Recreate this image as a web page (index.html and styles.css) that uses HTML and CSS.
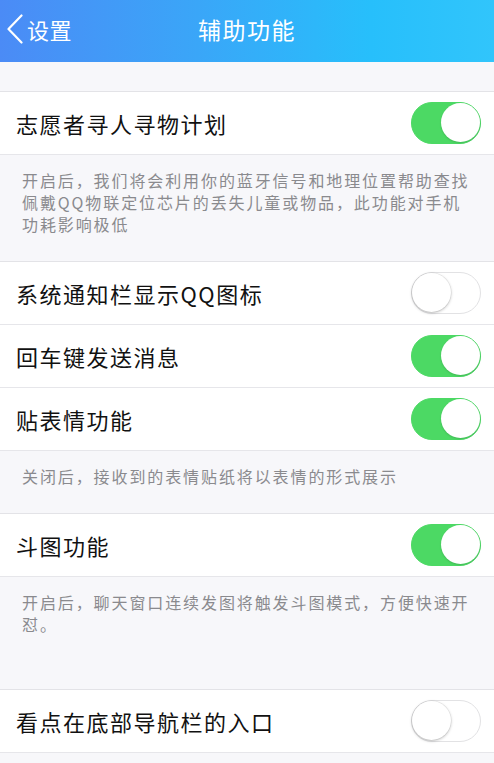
FILE: index.html
```html
<!DOCTYPE html>
<html>
<head>
    <meta charset="utf-8">
    <title>辅助功能</title>
    <link rel="stylesheet" href="styles.css">
</head>
<body>
    <div class="navbar">
        <a class="back" href="#">
            <svg class="chevron" width="18" height="30" viewBox="0 0 18 30">
                <path d="M15.5 1.5 L2.5 15 L15.5 28.5" fill="none" stroke="#fff" stroke-width="2.2" stroke-linecap="round" stroke-linejoin="round"/>
            </svg>
            <span>设置</span>
        </a>
        <div class="title">辅助功能</div>
    </div>

    <div class="spacer"></div>

    <div class="row first">
        <span class="label">志愿者寻人寻物计划</span>
        <span class="switch on"></span>
    </div>
    <div class="desc">
        开启后，我们将会利用你的蓝牙信号和地理位置帮助查找<br>
        佩戴QQ物联定位芯片的丢失儿童或物品，此功能对手机<br>
        功耗影响极低
    </div>

    <div class="row first">
        <span class="label">系统通知栏显示QQ图标</span>
        <span class="switch"></span>
    </div>
    <div class="row">
        <span class="label">回车键发送消息</span>
        <span class="switch on"></span>
    </div>
    <div class="row">
        <span class="label">贴表情功能</span>
        <span class="switch on"></span>
    </div>
    <div class="desc">关闭后，接收到的表情贴纸将以表情的形式展示</div>

    <div class="row first">
        <span class="label">斗图功能</span>
        <span class="switch on"></span>
    </div>
    <div class="desc tall">
        开启后，聊天窗口连续发图将触发斗图模式，方便快速开<br>
        怼。
    </div>

    <div class="row first">
        <span class="label">看点在底部导航栏的入口</span>
        <span class="switch"></span>
    </div>
</body>
</html>
```

FILE: styles.css
```css
body {
    margin: 0;
    background-color: #f7f7fa;
    font-family: "Noto Sans CJK SC", "Noto Sans", sans-serif;
    color: #111;
}
.navbar {
    position: relative;
    height: 62px;
    display: flex;
    align-items: center;
    justify-content: center;
    background: linear-gradient(90deg, #4b8bf6 0%, #3aa6f8 40%, #27bffb 75%, #31c5fb 100%);
    color: #fff;
}
.navbar .back {
    position: absolute;
    left: 6px;
    top: 13px;
    display: flex;
    align-items: center;
    gap: 3px;
    color: #fff;
    text-decoration: none;
    font-size: 22px;
    letter-spacing: 0.5px;
}
.navbar .title {
    font-size: 23px;
    letter-spacing: 1.5px;
    margin-top: -4px;
}
.spacer {
    height: 29px;
}
.row {
    height: 62px;
    display: flex;
    align-items: center;
    justify-content: space-between;
    padding: 0 13px 0 16px;
    background-color: #fff;
    border-bottom: 1px solid #e6e6ea;
}
.row.first {
    border-top: 1px solid #e3e3e7;
}
.row .label {
    font-size: 22px;
    letter-spacing: 1.5px;
}
.switch {
    position: relative;
    width: 70px;
    height: 42px;
    box-sizing: border-box;
    border-radius: 21px;
    border: 1.5px solid #e2e2e4;
    background-color: #fff;
}
.switch::after {
    content: "";
    position: absolute;
    left: 0;
    top: 0;
    width: 39px;
    height: 39px;
    border-radius: 50%;
    background-color: #fff;
    box-shadow: 0 1px 3px rgba(0, 0, 0, 0.25), 0 0 0 0.5px rgba(0, 0, 0, 0.08);
}
.switch.on {
    background-color: #4cd964;
    border-color: #4cd964;
}
.switch.on::after {
    left: auto;
    right: 0;
    box-shadow: 0 1px 2px rgba(0, 0, 0, 0.15);
}
.desc {
    padding: 14px 16px 26px 22px;
    font-size: 16px;
    line-height: 22px;
    letter-spacing: 1.9px;
    color: #8a8a8e;
}
.desc.tall {
    padding-bottom: 54px;
}
```
